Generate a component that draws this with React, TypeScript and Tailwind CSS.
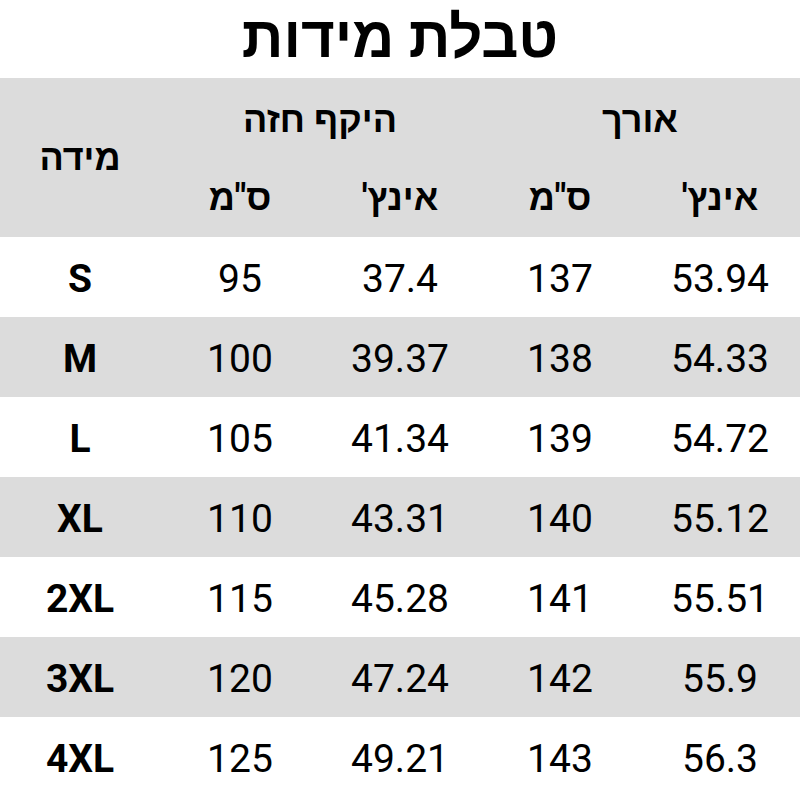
const rows = [
  { size: 'S', chestCm: '95', chestIn: '37.4', lenCm: '137', lenIn: '53.94' },
  { size: 'M', chestCm: '100', chestIn: '39.37', lenCm: '138', lenIn: '54.33' },
  { size: 'L', chestCm: '105', chestIn: '41.34', lenCm: '139', lenIn: '54.72' },
  { size: 'XL', chestCm: '110', chestIn: '43.31', lenCm: '140', lenIn: '55.12' },
  { size: '2XL', chestCm: '115', chestIn: '45.28', lenCm: '141', lenIn: '55.51' },
  { size: '3XL', chestCm: '120', chestIn: '47.24', lenCm: '142', lenIn: '55.9' },
  { size: '4XL', chestCm: '125', chestIn: '49.21', lenCm: '143', lenIn: '56.3' },
];

export default function App() {
  return (
    <div className="h-[800px] w-[800px] overflow-hidden bg-white font-['Roboto','Noto_Sans',sans-serif] text-black">
      <h1 className="flex h-[78px] items-center justify-center pb-1 text-[58px] font-black leading-none" dir="rtl">
        טבלת מידות
      </h1>

      <div className="grid h-[159px] grid-cols-5 grid-rows-[88px_71px] bg-[#dcdcdc] text-[36px] font-bold leading-none">
        <div className="row-span-2 flex items-center justify-center" dir="rtl">
          מידה
        </div>
        <div className="col-span-2 flex items-center justify-center pb-1" dir="rtl">
          היקף חזה
        </div>
        <div className="col-span-2 flex items-center justify-center pb-1" dir="rtl">
          אורך
        </div>
        <div className="flex items-center justify-center pb-2" dir="rtl">ס"מ</div>
        <div className="flex items-center justify-center pb-2" dir="rtl">אינץ'</div>
        <div className="flex items-center justify-center pb-2" dir="rtl">ס"מ</div>
        <div className="flex items-center justify-center pb-2" dir="rtl">אינץ'</div>
      </div>

      {rows.map((r, i) => (
        <div
          key={r.size}
          className={`grid h-[80px] grid-cols-5 items-center pt-1 text-center text-[39px] leading-none ${
            i % 2 === 1 ? 'bg-[#dcdcdc]' : 'bg-white'
          }`}
        >
          <div className="font-bold">{r.size}</div>
          <div>{r.chestCm}</div>
          <div>{r.chestIn}</div>
          <div>{r.lenCm}</div>
          <div>{r.lenIn}</div>
        </div>
      ))}
    </div>
  );
}
